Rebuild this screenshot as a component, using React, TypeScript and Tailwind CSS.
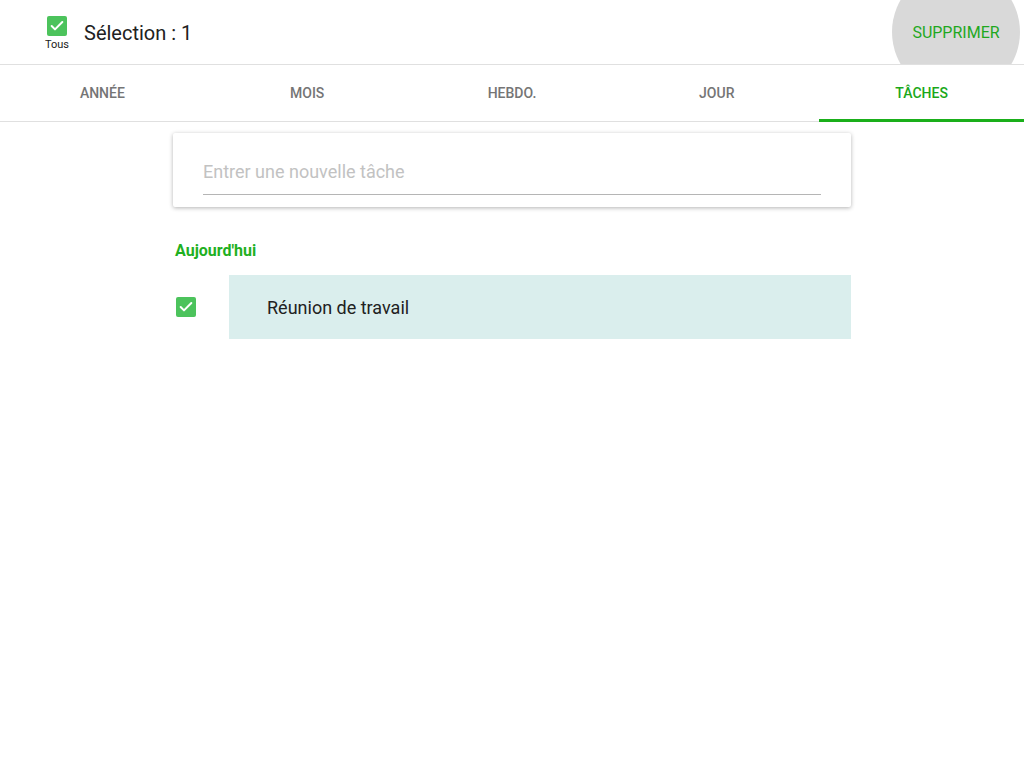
import { Check } from "lucide-react";

function GreenBox() {
  return (
    <div className="w-5 h-5 rounded-[2px] bg-[#4cc35c] flex items-center justify-center">
      <Check className="w-4 h-4 text-white" strokeWidth={3} />
    </div>
  );
}

export default function App() {
  const tabs = ["ANNÉE", "MOIS", "HEBDO.", "JOUR", "TÂCHES"];
  const active = 4;

  return (
    <div className="min-h-screen w-[1024px] h-[768px] bg-white font-['Roboto',sans-serif] overflow-hidden">
      <header className="h-[65px] border-b border-[#e0e0e0] flex items-center relative overflow-hidden">
        <div className="w-[68px] flex flex-col items-center pl-[46px] pt-[3px]">
          <div className="w-[22px] flex flex-col items-center">
            <GreenBox />
            <span className="text-[11px] leading-[14px] text-[#212121] mt-[2px]">Tous</span>
          </div>
        </div>
        <span className="ml-[16px] mt-[2px] text-[20px] text-[#212121]">Sélection : 1</span>
        <div className="ml-auto mr-[4px] w-[128px] h-[64px] relative flex items-center justify-center">
          <div className="absolute left-0 top-[-32px] w-[128px] h-[128px] rounded-full bg-[#d9d9d9]" />
          <span className="relative mt-[2px] text-[16px] text-[#1fa81f]">SUPPRIMER</span>
        </div>
      </header>

      <nav className="h-[57px] border-b border-[#e0e0e0] grid grid-cols-5">
        {tabs.map((t, i) => (
          <div
            key={t}
            className={`flex items-center justify-center text-[14px] font-medium relative ${
              i === active ? "text-[#1aa81a]" : "text-[#757575]"
            }`}
          >
            {t}
            {i === active && <div className="absolute left-0 right-0 bottom-[-1px] h-[3px] bg-[#1aaf1a]" />}
          </div>
        ))}
      </nav>

      <main className="w-[678px] ml-[173px] pt-[11px]">
        <div className="bg-white shadow-[0_1px_4px_rgba(0,0,0,0.3)] rounded-[2px] px-[30px] pt-[27px] pb-[12px]">
          <div className="border-b border-[#b5b5b5] pb-[10px] text-[18px] leading-[24px] text-[#c2c2c2]">
            Entrer une nouvelle tâche
          </div>
        </div>

        <div className="mt-[33px] pl-[2px] text-[16px] font-bold text-[#1fb01f] leading-[22px]">Aujourd'hui</div>

        <div className="mt-[13px] flex items-center h-[64px]">
          <div className="w-[56px] pl-[3px]">
            <GreenBox />
          </div>
          <div className="flex-1 h-full bg-[#daeeed] flex items-center pl-[38px] text-[18px] text-[#212121]">
            Réunion de travail
          </div>
        </div>
      </main>
    </div>
  );
}
